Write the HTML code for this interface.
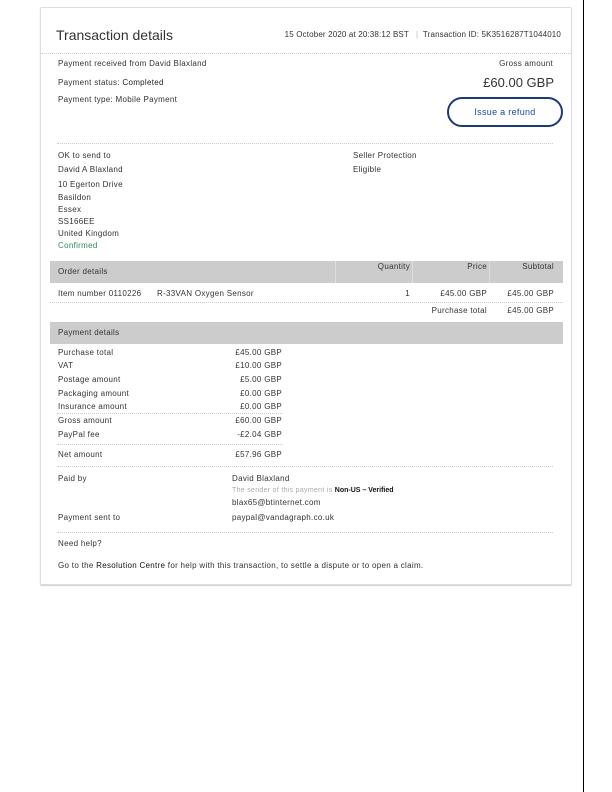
<!DOCTYPE html>
<html><head><meta charset="utf-8"><style>
*{margin:0;padding:0;box-sizing:border-box}
body{width:612px;height:792px;background:#fff;position:relative;font-family:"Liberation Sans",sans-serif;color:#333;font-size:8px;overflow:hidden;letter-spacing:0.3px}
.a{position:absolute;white-space:nowrap;line-height:10px}
.r{text-align:right}
.card{position:absolute;left:40px;top:7px;width:532px;height:578px;border:1px solid #ddd;border-radius:2px;box-shadow:0 1px 1px #ccc}
.hl{position:absolute;border-top:1px dotted #ccc}
.bar{position:absolute;left:50px;width:513px;height:22px;background:#ccc}
.vl{position:absolute;width:1px;background:#ddd}
</style></head><body>
<div style="position:absolute;left:583px;top:0;width:1px;height:792px;background:#000"></div>
<div class="card"></div>
<div class="a" style="left:56px;top:27px;font-size:14px;line-height:16px;color:#333;letter-spacing:0">Transaction details</div>
<div class="a r" style="right:51px;top:30px;letter-spacing:0.15px">15 October 2020 at 20:38:12 BST &nbsp; <span style="color:#bbb">|</span> &nbsp;Transaction ID: 5K3516287T1044010</div>
<div class="hl" style="left:41px;width:530px;top:53px"></div>
<div class="a" style="left:58px;top:59px">Payment received from David Blaxland</div>
<div class="a" style="left:58px;top:78px">Payment status: <span style="color:#222">Completed</span></div>
<div class="a" style="left:58px;top:95px">Payment type: Mobile Payment</div>
<div class="a r" style="right:59px;top:59px">Gross amount</div>
<div class="a r" style="right:58px;top:75px;font-size:13px;line-height:15px;letter-spacing:0">£60.00 GBP</div>
<div style="position:absolute;left:447px;top:97px;width:116px;height:30px;border:2px solid #1a3a7a;border-radius:15px;color:#1a4aa0;font-size:9px;text-align:center;line-height:26px">Issue a refund</div>
<div class="hl" style="left:57px;width:496px;top:143px"></div>
<div class="a" style="left:58px;top:151px">OK to send to</div>
<div class="a" style="left:58px;top:165px">David A Blaxland</div>
<div class="a" style="left:58px;top:180px">10 Egerton Drive</div>
<div class="a" style="left:58px;top:193px">Basildon</div>
<div class="a" style="left:58px;top:205px">Essex</div>
<div class="a" style="left:58px;top:217px">SS166EE</div>
<div class="a" style="left:58px;top:229px">United Kingdom</div>
<div class="a" style="left:58px;top:241px;color:#2a8a5a">Confirmed</div>
<div class="a" style="left:353px;top:151px">Seller Protection</div>
<div class="a" style="left:353px;top:165px">Eligible</div>
<div class="bar" style="top:261px"></div>
<div class="vl" style="left:335px;top:261px;height:22px"></div>
<div class="vl" style="left:412px;top:261px;height:22px"></div>
<div class="vl" style="left:489px;top:261px;height:22px"></div>
<div class="a" style="left:58px;top:267px">Order details</div>
<div class="a r" style="right:202px;top:262px">Quantity</div>
<div class="a r" style="right:125px;top:262px">Price</div>
<div class="a r" style="right:58px;top:262px">Subtotal</div>
<div class="a" style="left:58px;top:289px">Item number 0110226</div>
<div class="a" style="left:157px;top:289px">R-33VAN Oxygen Sensor</div>
<div class="a r" style="right:202px;top:289px">1</div>
<div class="a r" style="right:125px;top:289px">£45.00 GBP</div>
<div class="a r" style="right:58px;top:289px">£45.00 GBP</div>
<div class="hl" style="left:50px;width:513px;top:302px"></div>
<div class="a r" style="right:125px;top:306px">Purchase total</div>
<div class="a r" style="right:58px;top:306px">£45.00 GBP</div>
<div class="bar" style="top:322px"></div>
<div class="a" style="left:58px;top:328px">Payment details</div>
<div class="a" style="left:58px;top:348px">Purchase total</div><div class="a r" style="right:330px;top:348px">£45.00 GBP</div>
<div class="a" style="left:58px;top:361px">VAT</div><div class="a r" style="right:330px;top:361px">£10.00 GBP</div>
<div class="a" style="left:58px;top:375px">Postage amount</div><div class="a r" style="right:330px;top:375px">£5.00 GBP</div>
<div class="a" style="left:58px;top:389px">Packaging amount</div><div class="a r" style="right:330px;top:389px">£0.00 GBP</div>
<div class="a" style="left:58px;top:402px">Insurance amount</div><div class="a r" style="right:330px;top:402px">£0.00 GBP</div>
<div class="hl" style="left:57px;width:226px;top:413px"></div>
<div class="a" style="left:58px;top:416px">Gross amount</div><div class="a r" style="right:330px;top:416px">£60.00 GBP</div>
<div class="a" style="left:58px;top:430px">PayPal fee</div><div class="a r" style="right:330px;top:430px">-£2.04 GBP</div>
<div class="hl" style="left:57px;width:226px;top:444px"></div>
<div class="a" style="left:58px;top:450px">Net amount</div><div class="a r" style="right:330px;top:450px">£57.96 GBP</div>
<div class="hl" style="left:57px;width:496px;top:466px"></div>
<div class="a" style="left:58px;top:474px">Paid by</div>
<div class="a" style="left:232px;top:474px">David Blaxland</div>
<div class="a" style="left:232px;top:486px;font-size:7px;color:#aaa">The sender of this payment is <b style="color:#111;letter-spacing:0">Non-US – Verified</b></div>
<div class="a" style="left:232px;top:498px">blax65@btinternet.com</div>
<div class="a" style="left:58px;top:513px">Payment sent to</div>
<div class="a" style="left:232px;top:513px">paypal@vandagraph.co.uk</div>
<div class="hl" style="left:57px;width:496px;top:532px"></div>
<div class="a" style="left:58px;top:539px">Need help?</div>
<div class="a" style="left:58px;top:561px">Go to the <span style="color:#111">Resolution Centre</span> for help with this transaction, to settle a dispute or to open a claim.</div>
</body></html>
